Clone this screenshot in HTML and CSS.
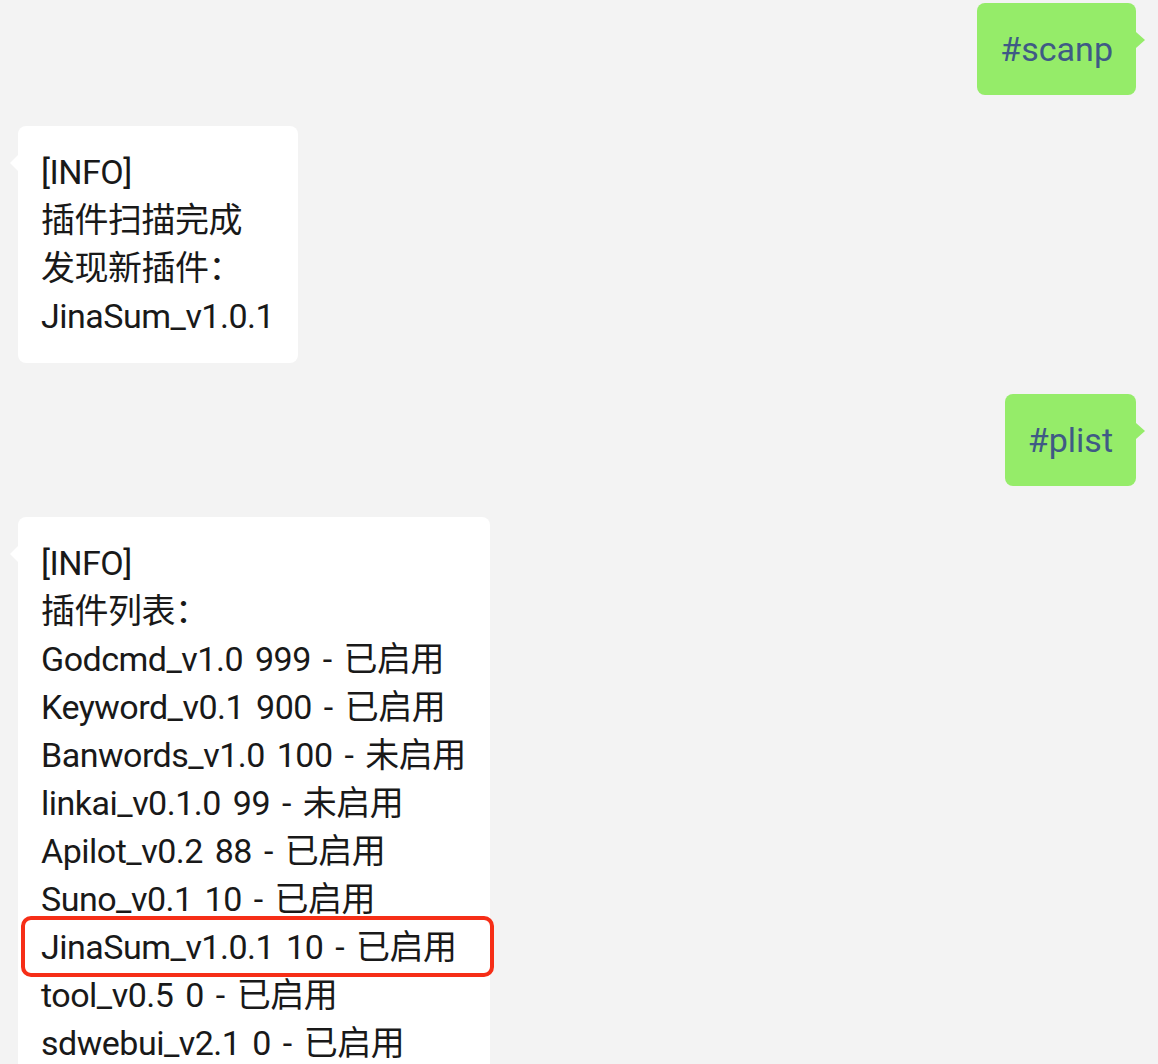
FILE: index.html
```html
<!DOCTYPE html>
<html lang="zh-CN">
<head>
<meta charset="utf-8">
<title>chat</title>
<link rel="stylesheet" href="styles.css">
</head>
<body>
<div class="chat">
  <div class="msg me">
    <div class="bubble green">#scanp</div>
  </div>
  <div class="msg bot">
    <div class="bubble white">
      <div class="line">[INFO]</div>
      <div class="line">插件扫描完成</div>
      <div class="line">发现新插件：</div>
      <div class="line">JinaSum_v1.0.1</div>
    </div>
  </div>
  <div class="msg me">
    <div class="bubble green">#plist</div>
  </div>
  <div class="msg bot">
    <div class="bubble white">
      <div class="line">[INFO]</div>
      <div class="line">插件列表：</div>
      <div class="line">Godcmd_v1.0 999 - 已启用</div>
      <div class="line">Keyword_v0.1 900 - 已启用</div>
      <div class="line">Banwords_v1.0 100 - 未启用</div>
      <div class="line">linkai_v0.1.0 99 - 未启用</div>
      <div class="line">Apilot_v0.2 88 - 已启用</div>
      <div class="line">Suno_v0.1 10 - 已启用</div>
      <div class="line hl">JinaSum_v1.0.1 10 - 已启用</div>
      <div class="line">tool_v0.5 0 - 已启用</div>
      <div class="line">sdwebui_v2.1 0 - 已启用</div>
    </div>
  </div>
</div>
</body>
</html>
```
FILE: styles.css
```css
html, body {
  margin: 0;
  padding: 0;
  background: #f3f3f3;
  overflow: hidden;
}
body {
  font-family: Roboto, "Noto Sans CJK SC", sans-serif;
  font-size: 34px;
  line-height: 48px;
  color: #191919;
}
.chat {
  display: flex;
  flex-direction: column;
  gap: 31px;
  padding: 3px 22px 0 18px;
}
.msg {
  display: flex;
}
.msg.me {
  justify-content: flex-end;
}
.msg.bot {
  justify-content: flex-start;
}
.bubble {
  position: relative;
  border-radius: 8px;
  padding: 22px 23px;
}
.bubble.green {
  background: #95ec69;
  color: #3f5a85;
  padding: 22px 23px;
}
.bubble.white {
  background: #ffffff;
  padding: 22px 24px 23px 23px;
  letter-spacing: -0.5px;
  word-spacing: 4px;
}
.bubble::before {
  content: "";
  position: absolute;
  top: 29px;
  width: 0;
  height: 0;
  border-top: 8px solid transparent;
  border-bottom: 8px solid transparent;
}
.bubble.green::before {
  right: -9px;
  border-left: 9px solid #95ec69;
}
.bubble.white::before {
  left: -8px;
  border-right: 8px solid #ffffff;
}
.line {
  white-space: nowrap;
}
.hl {
  position: relative;
}
.hl::after {
  content: "";
  position: absolute;
  left: -20px;
  right: -28px;
  top: -7px;
  bottom: -6px;
  border: 4px solid #f62e17;
  border-radius: 10px;
}
```
